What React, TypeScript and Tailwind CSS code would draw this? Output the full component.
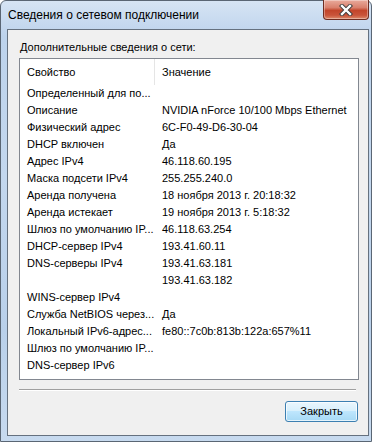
const rows: [string, string][] = [
  ["Определенный для по...", ""],
  ["Описание", "NVIDIA nForce 10/100 Mbps Ethernet"],
  ["Физический адрес", "6C-F0-49-D6-30-04"],
  ["DHCP включен", "Да"],
  ["Адрес IPv4", "46.118.60.195"],
  ["Маска подсети IPv4", "255.255.240.0"],
  ["Аренда получена", "18 ноября 2013 г. 20:18:32"],
  ["Аренда истекает", "19 ноября 2013 г. 5:18:32"],
  ["Шлюз по умолчанию IP...", "46.118.63.254"],
  ["DHCP-сервер IPv4", "193.41.60.11"],
  ["DNS-серверы IPv4", "193.41.63.181"],
  ["", "193.41.63.182"],
  ["WINS-сервер IPv4", ""],
  ["Служба NetBIOS через...", "Да"],
  ["Локальный IPv6-адрес...", "fe80::7c0b:813b:122a:657%11"],
  ["Шлюз по умолчанию IP...", ""],
  ["DNS-сервер IPv6", ""],
];

function CloseButton() {
  return (
    <div className="-mt-px mr-[2px] flex h-[20px] w-[46px] items-center justify-center rounded-b-[4px] border border-t-0 border-[#6e2d22] bg-[linear-gradient(180deg,#e9aa9c_0%,#d9806d_40%,#c2452b_55%,#c9543a_80%,#dd8a6b_100%)] shadow-[inset_0_0_0_1px_rgba(255,255,255,0.35)]">
      <svg width="14" height="12" viewBox="0 0 14 12">
        <path d="M3 2 L11 10 M11 2 L3 10" stroke="#3b3b3b" strokeWidth="4.2" strokeLinecap="square" />
        <path d="M3 2 L11 10 M11 2 L3 10" stroke="#ffffff" strokeWidth="2.4" strokeLinecap="square" />
      </svg>
    </div>
  );
}

function ListBox() {
  return (
    <div className="flex h-[322px] w-[340px] flex-col border border-[#828790] bg-white">
      <div className="flex h-[26px] shrink-0 items-center">
        <div className="w-[134px] pl-[7px]">Свойство</div>
        <div className="h-full w-px bg-[#e5e5e5]"></div>
        <div className="pl-[7px]">Значение</div>
      </div>
      {rows.map((row, index) => {
        return (
          <div key={index} className="flex h-[17px] shrink-0 items-center whitespace-nowrap">
            <div className="w-[134px] overflow-hidden pl-[7px]">{row[0]}</div>
            <div className="pl-[8px]">{row[1]}</div>
          </div>
        );
      })}
    </div>
  );
}

export default function App() {
  return (
    <div className="h-[445px] w-[375px] bg-white text-black [font-family:'Liberation_Sans',Arial,sans-serif]">
      <div className="flex h-[442px] w-[372px] flex-col rounded-tl-[6px] rounded-tr-[6px] border border-[#5a6674] bg-[linear-gradient(180deg,#d6e4f4_0%,#bdd3ec_8%,#c3d7ee_40%,#b9d0ea_75%,#c7daef_100%)]">
        <div className="flex h-[28px] shrink-0 items-start justify-between">
          <div className="pl-[7px] pt-[7px] text-[12px] leading-[15px]">Сведения о сетевом подключении</div>
          <CloseButton />
        </div>
        <div className="ml-[6px] flex h-[407px] w-[362px] flex-col border border-[#65717f] bg-[#f0f0f0] pl-[11px] pt-[11px] text-[11px] leading-[13px]">
          <div className="h-[13px] pl-px">Дополнительные сведения о сети:</div>
          <div className="mt-[4px]">
            <ListBox />
          </div>
          <div className="mt-[9px] h-[2px] w-[337px] border-t border-b border-t-[#a0a0a0] border-b-white"></div>
          <div className="mt-[10px] flex w-[339px] justify-end">
            <button className="flex h-[21px] w-[73px] items-center justify-center rounded-[3px] border border-[#3c7fb1] bg-[linear-gradient(180deg,#eaf6fd_0%,#d9f0fc_45%,#bee6fd_50%,#a7d9f5_100%)] text-[11px] shadow-[inset_0_0_0_1px_rgba(255,255,255,0.7)]">
              Закрыть
            </button>
          </div>
        </div>
      </div>
    </div>
  );
}
